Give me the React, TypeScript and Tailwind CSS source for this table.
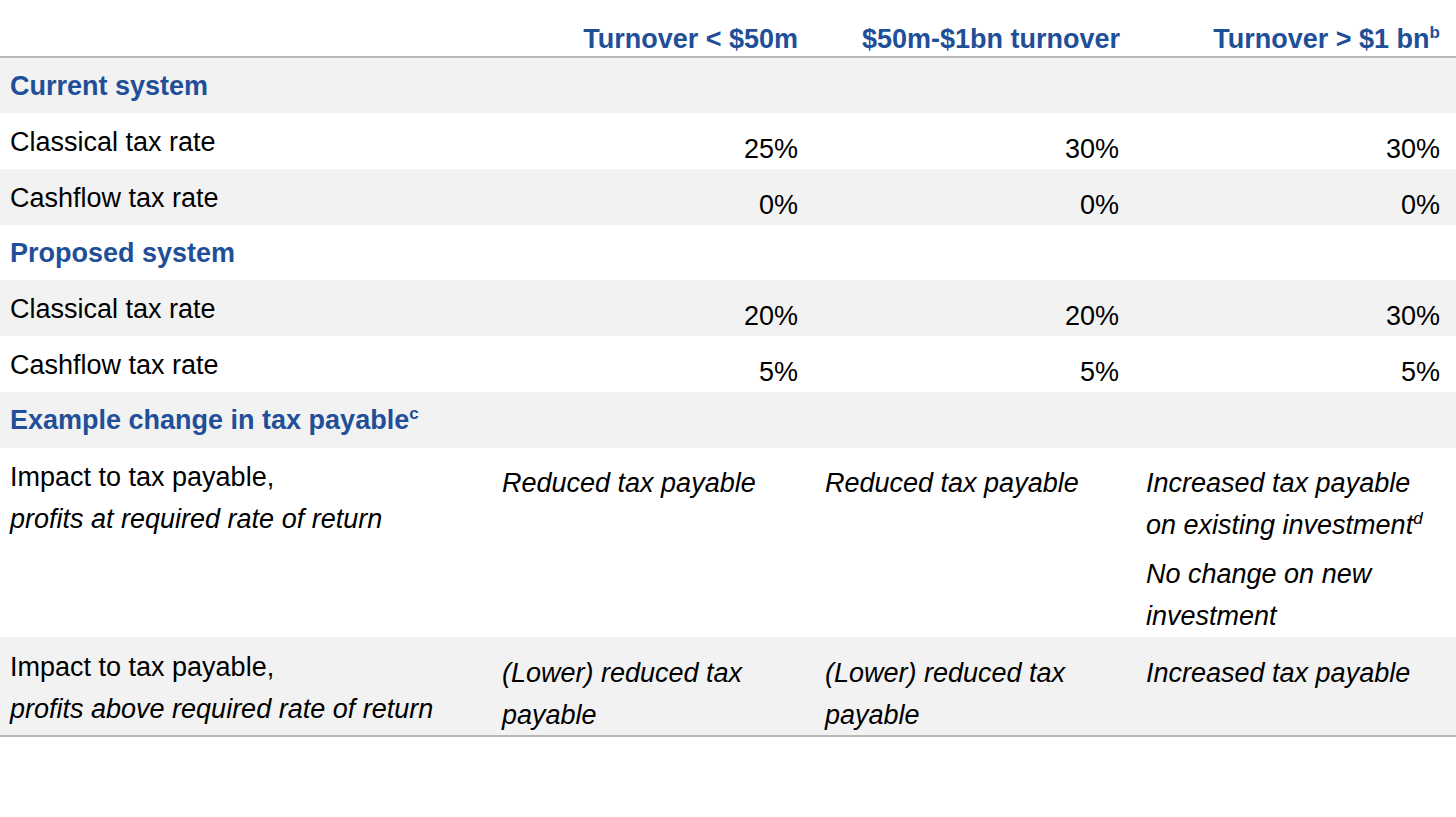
import React from "react";

const cols = "grid grid-cols-[490px_321px_321px_324px]";

function RateRow({ label, vals, gray, h }: { label: string; vals: string[]; gray?: boolean; h: string }) {
  return (
    <div className={`${cols} ${h} ${gray ? "bg-[#f2f2f2]" : "bg-white"}`}>
      <div className="pl-[10px] pt-[8px] leading-[42px]">{label}</div>
      {vals.map((v, i) => (
        <div
          key={i}
          className={`pt-[15px] leading-[42px] text-right ${i === 2 ? "pr-[16px]" : "pr-[13px]"}`}
        >
          {v}
        </div>
      ))}
    </div>
  );
}

function SectionRow({ children, gray, h }: { children: React.ReactNode; gray?: boolean; h: string }) {
  return (
    <div className={`${h} flex items-center pl-[10px] font-bold text-[#1f4f98] ${gray ? "bg-[#f2f2f2]" : "bg-white"}`}>
      <span className="leading-[32px]">{children}</span>
    </div>
  );
}

function Sup({ children }: { children: React.ReactNode }) {
  return <sup className="text-[17px] relative -top-[10px] align-baseline">{children}</sup>;
}

export default function App() {
  return (
    <div
      className="w-[1456px] h-[817px] bg-white text-black text-[27px]"
      style={{ fontFamily: '"Liberation Sans", Arial, sans-serif' }}
    >
      {/* Header */}
      <div className={`${cols} h-[58px] border-b-2 border-[#b8b8b8] font-bold text-[#1f4f98]`}>
        <div />
        <div className="text-right pr-[13px] pt-[23px] leading-[32px]">Turnover &lt; $50m</div>
        <div className="text-right pr-[12px] pt-[23px] leading-[32px]">$50m-$1bn turnover</div>
        <div className="text-right pr-[16px] pt-[23px] leading-[32px]">
          Turnover &gt; $1 bn<Sup>b</Sup>
        </div>
      </div>

      <SectionRow gray h="h-[55px]">Current system</SectionRow>
      <RateRow label="Classical tax rate" vals={["25%", "30%", "30%"]} h="h-[56px]" />
      <RateRow label="Cashflow tax rate" vals={["0%", "0%", "0%"]} gray h="h-[56px]" />

      <SectionRow h="h-[55px]">Proposed system</SectionRow>
      <RateRow label="Classical tax rate" vals={["20%", "20%", "30%"]} gray h="h-[56px]" />
      <RateRow label="Cashflow tax rate" vals={["5%", "5%", "5%"]} h="h-[56px]" />

      <SectionRow gray h="h-[56px]">
        Example change in tax payable<Sup>c</Sup>
      </SectionRow>

      {/* Impact row 1 */}
      <div className={`${cols} h-[189px] bg-white leading-[42px]`}>
        <div className="pl-[10px] pt-[8px]">
          <div>Impact to tax payable,</div>
          <div className="italic">profits at required rate of return</div>
        </div>
        <div className="pl-[12px] pt-[14px] italic">Reduced tax payable</div>
        <div className="pl-[14px] pt-[14px] italic">Reduced tax payable</div>
        <div className="pl-[14px] pt-[14px] italic">
          <div>
            Increased tax payable
            <br />
            on existing investment<Sup>d</Sup>
          </div>
          <div className="mt-[7px]">
            No change on new
            <br />
            investment
          </div>
        </div>
      </div>

      {/* Impact row 2 */}
      <div className={`${cols} h-[100px] bg-[#f2f2f2] border-b-2 border-[#b8b8b8] leading-[42px]`}>
        <div className="pl-[10px] pt-[9px]">
          <div>Impact to tax payable,</div>
          <div className="italic">profits above required rate of return</div>
        </div>
        <div className="pl-[12px] pt-[15px] italic">
          (Lower) reduced tax
          <br />
          payable
        </div>
        <div className="pl-[14px] pt-[15px] italic">
          (Lower) reduced tax
          <br />
          payable
        </div>
        <div className="pl-[14px] pt-[15px] italic">Increased tax payable</div>
      </div>
    </div>
  );
}
